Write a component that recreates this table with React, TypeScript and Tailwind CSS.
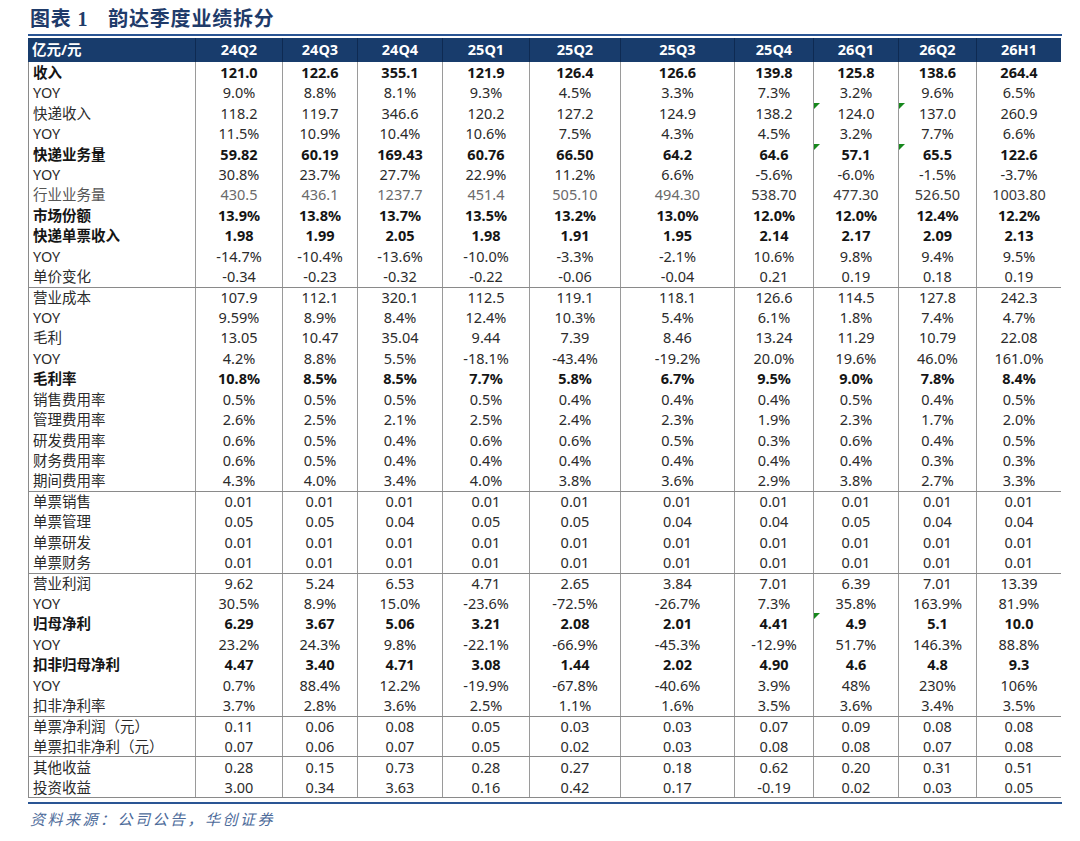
const cols = ['24Q2', '24Q3', '24Q4', '25Q1', '25Q2', '25Q3', '25Q4', '26Q1', '26Q2', '26H1'];

interface Row {
  label: string;
  vals: string[];
  bold?: boolean;
  gray?: boolean;
  top?: boolean;
  marks?: number[];
}

const rows: Row[] = [
  { label: '收入', bold: true, vals: ['121.0', '122.6', '355.1', '121.9', '126.4', '126.6', '139.8', '125.8', '138.6', '264.4'] },
  { label: 'YOY', vals: ['9.0%', '8.8%', '8.1%', '9.3%', '4.5%', '3.3%', '7.3%', '3.2%', '9.6%', '6.5%'] },
  { label: '快递收入', marks: [7, 8], vals: ['118.2', '119.7', '346.6', '120.2', '127.2', '124.9', '138.2', '124.0', '137.0', '260.9'] },
  { label: 'YOY', vals: ['11.5%', '10.9%', '10.4%', '10.6%', '7.5%', '4.3%', '4.5%', '3.2%', '7.7%', '6.6%'] },
  { label: '快递业务量', bold: true, marks: [7, 8], vals: ['59.82', '60.19', '169.43', '60.76', '66.50', '64.2', '64.6', '57.1', '65.5', '122.6'] },
  { label: 'YOY', vals: ['30.8%', '23.7%', '27.7%', '22.9%', '11.2%', '6.6%', '-5.6%', '-6.0%', '-1.5%', '-3.7%'] },
  { label: '行业业务量', gray: true, vals: ['430.5', '436.1', '1237.7', '451.4', '505.10', '494.30', '538.70', '477.30', '526.50', '1003.80'] },
  { label: '市场份额', bold: true, vals: ['13.9%', '13.8%', '13.7%', '13.5%', '13.2%', '13.0%', '12.0%', '12.0%', '12.4%', '12.2%'] },
  { label: '快递单票收入', bold: true, vals: ['1.98', '1.99', '2.05', '1.98', '1.91', '1.95', '2.14', '2.17', '2.09', '2.13'] },
  { label: 'YOY', vals: ['-14.7%', '-10.4%', '-13.6%', '-10.0%', '-3.3%', '-2.1%', '10.6%', '9.8%', '9.4%', '9.5%'] },
  { label: '单价变化', vals: ['-0.34', '-0.23', '-0.32', '-0.22', '-0.06', '-0.04', '0.21', '0.19', '0.18', '0.19'] },
  { label: '营业成本', top: true, vals: ['107.9', '112.1', '320.1', '112.5', '119.1', '118.1', '126.6', '114.5', '127.8', '242.3'] },
  { label: 'YOY', vals: ['9.59%', '8.9%', '8.4%', '12.4%', '10.3%', '5.4%', '6.1%', '1.8%', '7.4%', '4.7%'] },
  { label: '毛利', vals: ['13.05', '10.47', '35.04', '9.44', '7.39', '8.46', '13.24', '11.29', '10.79', '22.08'] },
  { label: 'YOY', vals: ['4.2%', '8.8%', '5.5%', '-18.1%', '-43.4%', '-19.2%', '20.0%', '19.6%', '46.0%', '161.0%'] },
  { label: '毛利率', bold: true, vals: ['10.8%', '8.5%', '8.5%', '7.7%', '5.8%', '6.7%', '9.5%', '9.0%', '7.8%', '8.4%'] },
  { label: '销售费用率', vals: ['0.5%', '0.5%', '0.5%', '0.5%', '0.4%', '0.4%', '0.4%', '0.5%', '0.4%', '0.5%'] },
  { label: '管理费用率', vals: ['2.6%', '2.5%', '2.1%', '2.5%', '2.4%', '2.3%', '1.9%', '2.3%', '1.7%', '2.0%'] },
  { label: '研发费用率', vals: ['0.6%', '0.5%', '0.4%', '0.6%', '0.6%', '0.5%', '0.3%', '0.6%', '0.4%', '0.5%'] },
  { label: '财务费用率', vals: ['0.6%', '0.5%', '0.4%', '0.4%', '0.4%', '0.4%', '0.4%', '0.4%', '0.3%', '0.3%'] },
  { label: '期间费用率', vals: ['4.3%', '4.0%', '3.4%', '4.0%', '3.8%', '3.6%', '2.9%', '3.8%', '2.7%', '3.3%'] },
  { label: '单票销售', top: true, vals: ['0.01', '0.01', '0.01', '0.01', '0.01', '0.01', '0.01', '0.01', '0.01', '0.01'] },
  { label: '单票管理', vals: ['0.05', '0.05', '0.04', '0.05', '0.05', '0.04', '0.04', '0.05', '0.04', '0.04'] },
  { label: '单票研发', vals: ['0.01', '0.01', '0.01', '0.01', '0.01', '0.01', '0.01', '0.01', '0.01', '0.01'] },
  { label: '单票财务', vals: ['0.01', '0.01', '0.01', '0.01', '0.01', '0.01', '0.01', '0.01', '0.01', '0.01'] },
  { label: '营业利润', top: true, vals: ['9.62', '5.24', '6.53', '4.71', '2.65', '3.84', '7.01', '6.39', '7.01', '13.39'] },
  { label: 'YOY', vals: ['30.5%', '8.9%', '15.0%', '-23.6%', '-72.5%', '-26.7%', '7.3%', '35.8%', '163.9%', '81.9%'] },
  { label: '归母净利', bold: true, marks: [7], vals: ['6.29', '3.67', '5.06', '3.21', '2.08', '2.01', '4.41', '4.9', '5.1', '10.0'] },
  { label: 'YOY', vals: ['23.2%', '24.3%', '9.8%', '-22.1%', '-66.9%', '-45.3%', '-12.9%', '51.7%', '146.3%', '88.8%'] },
  { label: '扣非归母净利', bold: true, vals: ['4.47', '3.40', '4.71', '3.08', '1.44', '2.02', '4.90', '4.6', '4.8', '9.3'] },
  { label: 'YOY', vals: ['0.7%', '88.4%', '12.2%', '-19.9%', '-67.8%', '-40.6%', '3.9%', '48%', '230%', '106%'] },
  { label: '扣非净利率', vals: ['3.7%', '2.8%', '3.6%', '2.5%', '1.1%', '1.6%', '3.5%', '3.6%', '3.4%', '3.5%'] },
  { label: '单票净利润（元）', top: true, vals: ['0.11', '0.06', '0.08', '0.05', '0.03', '0.03', '0.07', '0.09', '0.08', '0.08'] },
  { label: '单票扣非净利（元）', vals: ['0.07', '0.06', '0.07', '0.05', '0.02', '0.03', '0.08', '0.08', '0.07', '0.08'] },
  { label: '其他收益', top: true, vals: ['0.28', '0.15', '0.73', '0.28', '0.27', '0.18', '0.62', '0.20', '0.31', '0.51'] },
  { label: '投资收益', vals: ['3.00', '0.34', '3.63', '0.16', '0.42', '0.17', '-0.19', '0.02', '0.03', '0.05'] },
];

const grid =
  'grid grid-cols-[167px_87px_75px_85px_87px_91px_114px_79px_85px_78px_85px]';

function Mark() {
  return (
    <span className="absolute left-0 top-0 w-0 h-0 border-t-[6px] border-t-[#16881c] border-r-[6px] border-r-transparent" />
  );
}

export default function App() {
  return (
    <div
      className="w-[1080px] h-[841px] bg-white overflow-hidden"
      style={{ fontFamily: '"Noto Sans", "Noto Sans CJK SC", sans-serif' }}
    >
      {/* title */}
      <div
        className="h-[34px] pl-[30px] pt-[8px] text-[20px] leading-[22px] font-bold text-[#1f3b6a] tracking-[0.8px]"
        style={{ fontFamily: '"Liberation Serif", "Noto Sans CJK SC", serif' }}
      >
        图表 1<span className="ml-[20px]">韵达季度业绩拆分</span>
      </div>
      <div className="ml-[28px] w-[1034px] h-[2px] bg-[#2a5594]" />

      {/* table */}
      <div className="ml-[28px] mt-[2px] w-[1033px]">
        <div className={`${grid} h-[24px] bg-[#183c6c] text-white font-bold text-[14.5px]`}>
          <div className="flex items-center pl-[4px]">亿元/元</div>
          {cols.map((c) => (
            <div key={c} className="flex items-center justify-center border-l border-[#0e2a52]">
              {c}
            </div>
          ))}
        </div>

        <div className="border-b border-[#8a8a8a]">
          {rows.map((r, i) => (
            <div
              key={i}
              className={`${grid} h-[20.43px] text-[14.5px] leading-none ${
                r.top ? 'border-t border-[#8a8a8a]' : ''
              } ${r.bold ? 'font-bold text-[#151515]' : 'text-[#2b2b2b]'}`}
            >
              <div
                className={`flex items-center pl-[4px] border-l border-[#8a8a8a] whitespace-nowrap ${
                  r.gray ? 'text-[#555]' : ''
                }`}
              >
                {r.label}
              </div>
              {r.vals.map((v, j) => (
                <div
                  key={j}
                  className={`relative flex items-center justify-center border-l border-[#9a9a9a] ${
                    r.gray ? (j < 6 ? 'text-[#6a6a6a]' : 'text-[#3a3a3a]') : ''
                  }`}
                >
                  {r.marks?.includes(j) && <Mark />}
                  {v}
                </div>
              ))}
            </div>
          ))}
        </div>
      </div>

      <div className="ml-[28px] mt-[4px] w-[1034px] h-[2px] bg-[#2a5594]" />

      {/* source */}
      <div
        className="pl-[30px] mt-[6px] text-[15px] leading-[20px] italic text-[#4d6b9a] tracking-[2.5px]"
        style={{ fontFamily: '"Liberation Serif", "Noto Sans CJK SC", serif' }}
      >
        资料来源：公司公告，华创证券
      </div>
    </div>
  );
}
